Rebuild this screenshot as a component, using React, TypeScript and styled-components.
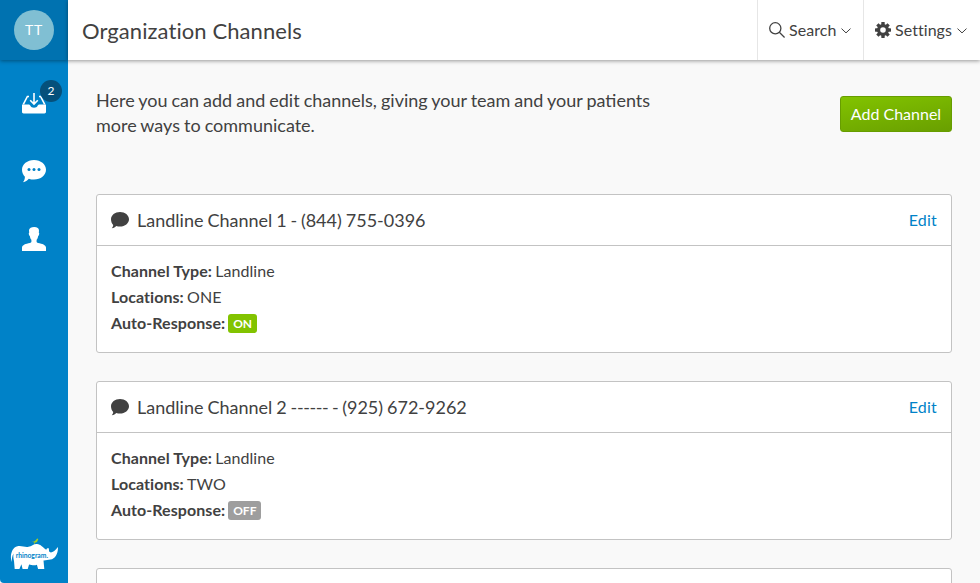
import React from "react";
import styled, { createGlobalStyle } from "styled-components";

const GlobalStyle = createGlobalStyle`
  * { box-sizing: border-box; }
  html, body, #root { height: 100%; }
  body {
    margin: 0;
    overflow: hidden;
    background: #f9f9f9;
    color: #414141;
    font: 16px/26px Lato, sans-serif;
  }
  svg { display: block; flex: none; }
`;

const Shell = styled.div`
  display: flex;
  height: 100%;
  overflow: hidden;
`;

const Sidebar = styled.nav`
  width: 68px;
  flex: none;
  display: flex;
  flex-direction: column;
  align-items: center;
  background: #0082c8;
  color: #fff;
  border-bottom-left-radius: 4px;
`;

const Profile = styled.div`
  width: 68px;
  height: 60px;
  display: flex;
  align-items: center;
  justify-content: center;
  background: #0072b0;
  box-shadow: 0 1px 4px rgba(0, 0, 0, 0.4);
`;

const Avatar = styled.div`
  width: 40px;
  height: 40px;
  border-radius: 50%;
  background: #80bfd3;
  font-size: 14px;
  line-height: 40px;
  letter-spacing: 0.8px;
  text-align: center;
`;

const NavItem = styled.a`
  position: relative;
  width: 68px;
  height: 68px;
  display: flex;
  align-items: center;
  justify-content: center;
  &:first-of-type { margin-top: 9px; }
`;

const Count = styled.span`
  position: absolute;
  left: 40px;
  top: 11px;
  width: 22px;
  height: 22px;
  border-radius: 50%;
  background: #05507b;
  font-size: 12px;
  line-height: 22px;
  text-align: center;
`;

const Brand = styled.div`
  margin-top: auto;
  height: 45px;
`;

const Main = styled.main`
  flex: 1;
  min-width: 0;
  display: flex;
  flex-direction: column;
`;

const TopBar = styled.header`
  height: 60px;
  flex: none;
  display: flex;
  background: #fff;
  box-shadow: 0 1px 4px rgba(0, 0, 0, 0.4);
`;

const Title = styled.h1`
  flex: 1;
  margin: 0;
  padding: 2px 0 0 14px;
  font-size: 22px;
  font-weight: 400;
  line-height: 58px;
  letter-spacing: 0.08px;
`;

const TopAction = styled.button<{ $width: number }>`
  width: ${(p) => p.$width}px;
  display: flex;
  align-items: center;
  padding: 0 0 0 11px;
  border: 0;
  border-left: 1px solid #e6e6e6;
  background: none;
  color: inherit;
  font: 16px/24px Lato, sans-serif;
  letter-spacing: 0.06px;
  span { margin: 0 5px 0 4px; }
  svg:last-child { margin-top: 2px; }
`;

const Content = styled.section`
  flex: 1;
  min-height: 0;
  overflow: hidden;
  margin-top: 6px;
  padding: 22px 28px 0;
`;

const Intro = styled.div`
  display: flex;
  justify-content: space-between;
  align-items: flex-start;
  height: 106px;
`;

const Lead = styled.p`
  width: 560px;
  margin: 0;
  font-size: 18px;
  line-height: 25px;
  word-spacing: -0.6px;
`;

const AddButton = styled.button`
  width: 112px;
  height: 36px;
  margin-top: 8px;
  padding: 0;
  border: 1px solid #679d00;
  border-radius: 3px;
  background: linear-gradient(170deg, #82c300, #699f00);
  color: #fff;
  font: 16px/34px Lato, sans-serif;
`;

const Card = styled.article`
  height: 159px;
  margin-bottom: 28px;
  border: 1px solid #c3c3c3;
  border-radius: 3px;
  background: #fff;
`;

const CardHeader = styled.header`
  height: 51px;
  display: flex;
  align-items: center;
  padding: 0 14px;
  border-bottom: 1px solid #c3c3c3;
`;

const CardTitle = styled.h2`
  flex: 1;
  margin: 0 0 0 8px;
  font-size: 18px;
  font-weight: 400;
  word-spacing: -0.65px;
`;

const Dashes = styled.span`
  letter-spacing: -0.4px;
`;

const EditLink = styled.a`
  color: #0082c8;
  letter-spacing: 0.2px;
`;

const CardBody = styled.div`
  padding: 12px 14px;
`;

const Field = styled.div`
  display: flex;
  align-items: center;
  gap: 3.3px;
  height: 26px;
  letter-spacing: 0.06px;
`;

const Status = styled.span<{ $on: boolean }>`
  height: 19px;
  padding: 0 4.700px;
  border-radius: 3px;
  background: ${(p) => (p.$on ? "#82c300" : "#9e9e9e")};
  color: #fff;
  font-size: 12px;
  font-weight: 700;
  line-height: 19px;
  letter-spacing: 0;
`;

const InboxIcon = () => (
  <svg width="24" height="21" viewBox="0 0 24 21" fill="none">
    <path d="M7 3.500H5.400L1.300 11.300M17 3.500h1.600l4.100 7.800" stroke="#fff" strokeWidth="1.600" />
    <path d="M0 11.500h6.500c1 0 1.500.5 2 1.500.6 1.200 1.500 1.700 3.500 1.700s2.900-.5 3.500-1.700c.5-1 1-1.500 2-1.500H24v7.300c0 1-.6 1.600-1.600 1.600H1.600C.6 20.400 0 19.800 0 18.800z" fill="#fff" />
    <path d="M12 0v10M8.200 7.200l3.800 3.800 3.800-3.800" stroke="#fff" strokeWidth="1.600" />
  </svg>
);

const ChatIcon = () => (
  <svg width="24" height="23" viewBox="0 0 24 23">
    <path d="M12 0c6.700 0 12 4.300 12 9.800s-5.300 9.800-12 9.800c-1.900 0-3.600-.3-5.200-.9-1.500 1.700-3.200 3.100-5.800 3.500 1.300-1.700 1.900-3.400 1.900-5.500C1.100 14.900 0 12.500 0 9.800 0 4.300 5.300 0 12 0z" fill="#fff" />
    <g fill="#0082c8"><circle cx="7" cy="9.600" r="1.500" /><circle cx="12" cy="9.600" r="1.500" /><circle cx="17" cy="9.600" r="1.500" /></g>
  </svg>
);

const PersonIcon = () => (
  <svg width="24" height="24" viewBox="0 0 24 24">
    <path d="M7 3C7.500 1 9.300 0 12.200 0c3.100 0 4.800 1.200 4.800 3.700l-.2 2.100c.6.300.5 1.300.1 2.200-.2.600-.5 1-.8 1.200-.3 1.700-.8 2.800-1.500 3.500v2.200c.1.500.6.800 1.400 1 4.500.8 7.600 1.900 8 4.500V24H0v-3.600c.4-2.600 3.500-3.700 8-4.500.8-.2 1.300-.5 1.400-1v-2.200C8.700 12 8.200 10.900 7.900 9.200c-.3-.2-.6-.6-.8-1.200-.4-.9-.5-1.900.1-2.200z" fill="#fff" />
  </svg>
);

const SearchIcon = () => (
  <svg width="16" height="16" viewBox="0 0 16 16" fill="none" stroke="#414141" strokeWidth="1.300">
    <circle cx="6.300" cy="6.300" r="5.600" /><path d="m10.300 10.300 5.300 5.200" />
  </svg>
);

const GearIcon = () => (
  <svg width="16" height="16" viewBox="0 0 16 16">
    <g fill="#414141">
      {[0, 45, 90, 135].map((angle) => (
        <rect key={angle} x="6.300" y="0" width="3.400" height="16" rx=".4" transform={`rotate(${angle} 8 8)`} />
      ))}
      <circle cx="8" cy="8" r="6" />
    </g>
    <circle cx="8" cy="8" r="2.800" fill="#fff" />
  </svg>
);

const Chevron = () => (
  <svg width="10" height="6" viewBox="0 0 10 6" fill="none" stroke="#414141">
    <path d="m.5.600 4.500 4.300L9.500.600" />
  </svg>
);

const BubbleIcon = () => (
  <svg width="18" height="17" viewBox="0 0 18 17">
    <path d="M9 0c5 0 9 3.200 9 7.300s-4 7.300-9 7.300c-1.300 0-2.600-.2-3.700-.6-1.100 1.100-2.500 2-4.500 2.300.8-.9 1.300-1.800 1.400-3.200C.8 11.500 0 9.500 0 7.300 0 3.200 4 0 9 0z" fill="#414141" />
  </svg>
);

const RhinoLogo = () => (
  <svg width="48" height="32" viewBox="0 0 48 32">
    <path d="M1.500 24C-.3 17 2 9.500 7.500 8.300c4-.9 7.500 1.300 11 .5 3.300-.6 5-3 8.500-2.800 3.700.2 6 3.600 9.300 5.800.2-1.200 1.400-2 2-1.800.7.400.8 2.500.8 3.600 1.800 2.100 5.600-.1 8.800-4.600.5 6-2.500 12-7.400 12.600-2.700.3-4.500 1-7 .9l.8 8.500h-6.200l-1.200-4.300c-2.400 1.100-5.600.3-7.800-.2L17.700 31h-5.100l-1.200-4.800-2 4.800H4.700L4 23c-.6-2-1-5-.4-7.600C1.900 18 2 21 1.500 24z" fill="#fff" />
    <path d="M21.700 3.700c1.700.1 2.800-.3 3.800-1.200L27.200.6l1.100.3-.6 1.500c-.3 1.300-1.200 2-2.500 2.200l-.3 1.100h-.7l.2-1.300z" fill="#a8cf20" />
    <text x="5.700" y="19.500" textLength="32.300" lengthAdjust="spacingAndGlyphs" fill="#0082c8" fontFamily="Lato, sans-serif" fontSize="7.400" fontWeight="700">rhinogram.</text>
  </svg>
);

const channels = [
  { name: "Landline Channel 1", dashes: "-", phone: "(844) 755-0396", location: "ONE", on: true },
  { name: "Landline Channel 2", dashes: "------ -", phone: "(925) 672-9262", location: "TWO", on: false },
];

export default function App() {
  return (
    <Shell>
      <GlobalStyle />
      <Sidebar>
        <Profile><Avatar>TT</Avatar></Profile>
        <NavItem><InboxIcon /><Count>2</Count></NavItem>
        <NavItem><ChatIcon /></NavItem>
        <NavItem><PersonIcon /></NavItem>
        <Brand><RhinoLogo /></Brand>
      </Sidebar>
      <Main>
        <TopBar>
          <Title>Organization Channels</Title>
          <TopAction $width={106}><SearchIcon /><span>Search</span><Chevron /></TopAction>
          <TopAction $width={117}><GearIcon /><span>Settings</span><Chevron /></TopAction>
        </TopBar>
        <Content>
          <Intro>
            <Lead>Here you can add and edit channels, giving your team and your patients more ways to communicate.</Lead>
            <AddButton>Add Channel</AddButton>
          </Intro>
          {channels.map((channel) => (
            <Card key={channel.name}>
              <CardHeader>
                <BubbleIcon />
                <CardTitle>{channel.name} <Dashes>{channel.dashes}</Dashes> {channel.phone}</CardTitle>
                <EditLink>Edit</EditLink>
              </CardHeader>
              <CardBody>
                <Field><b>Channel Type:</b>Landline</Field>
                <Field><b>Locations:</b>{channel.location}</Field>
                <Field><b>Auto-Response:</b><Status $on={channel.on}>{channel.on ? "ON" : "OFF"}</Status></Field>
              </CardBody>
            </Card>
          ))}
          <Card />
        </Content>
      </Main>
    </Shell>
  );
}
